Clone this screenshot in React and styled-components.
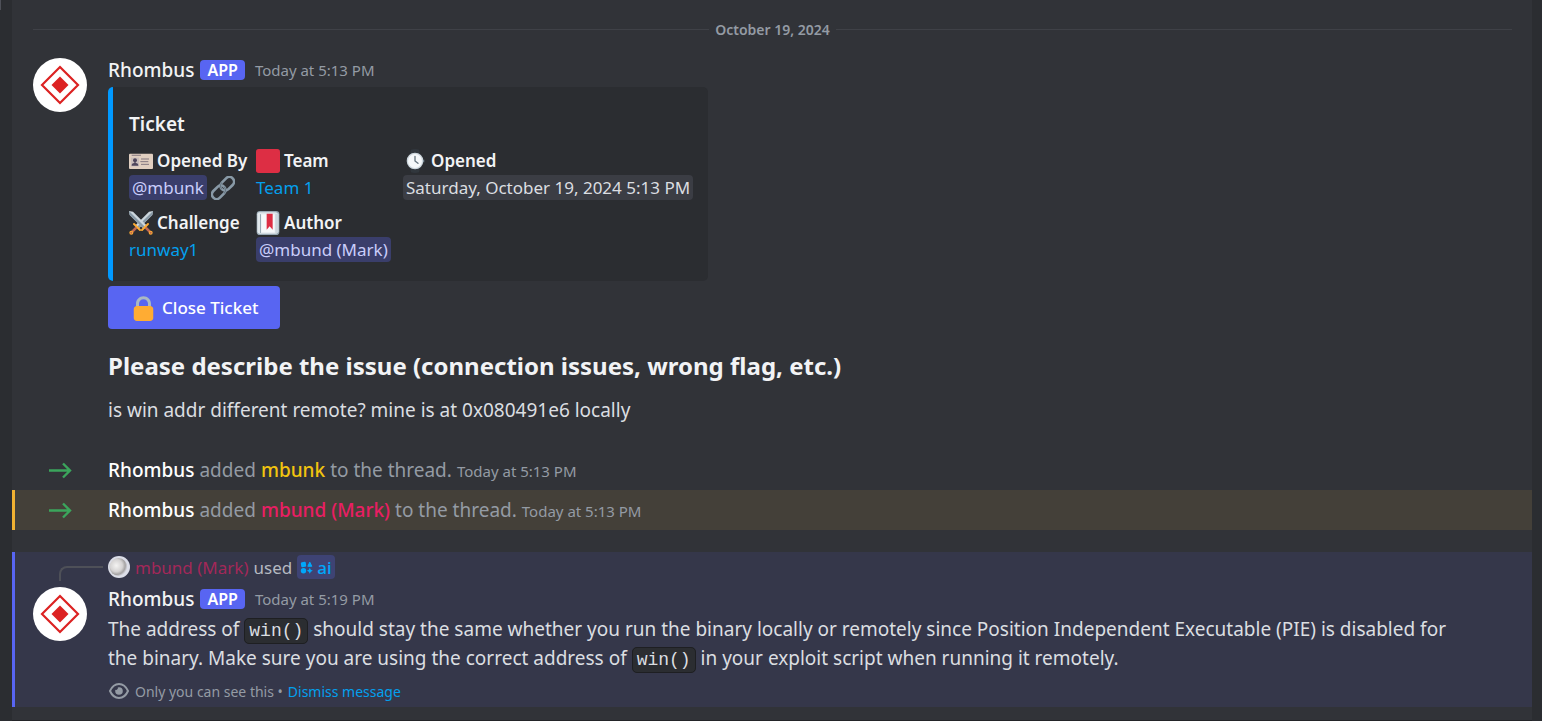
import React from 'react';
import styled, { createGlobalStyle } from 'styled-components';

const GlobalStyle = createGlobalStyle`
  * { box-sizing: border-box; }
  body {
    margin: 0;
    background: #2b2d31;
    font-family: "Noto Sans", "Open Sans", sans-serif;
    font-size: 19px;
    color: #dbdee1;
  }
  button { font: inherit; border: 0; cursor: pointer; }
  h1, h2, h3, p, ul, ol, dl, dd, dt { margin: 0; padding: 0; }
`;

const Page = styled.div`
  min-height: 100vh;
  padding: 0 10px 0 12px;
  background: linear-gradient(#4e5058, #4e5058) 0 0 / 1px 10px no-repeat;
`;

const Chat = styled.main`
  min-height: 100vh;
  padding-bottom: 12px;
  background: #313338;
  border-bottom: 1px solid #232428;
`;

const Divider = styled.div`
  display: flex;
  align-items: center;
  gap: 6px;
  padding: 19px 20px 0 21px;
  font-size: 14px;
  font-weight: 600;
  line-height: 21px;
  color: #949ba4;
  &::before, &::after {
    content: "";
    flex: 1;
    height: 1px;
    background: #3f4147;
  }
`;

const Message = styled.article`
  display: grid;
  grid-template-columns: 75px minmax(0, 1fr);
  row-gap: 6px;
  margin-top: ${p => (p.$ephemeral ? '22px' : '0')};
  padding: ${p => (p.$ephemeral ? '1px 64px 4px 18px' : '18px 64px 0 21px')};
  border-left: ${p => (p.$ephemeral ? '3px solid #5865f2' : '0')};
  background: ${p => (p.$ephemeral ? '#35374a' : 'transparent')};
`;

const AvatarSvg = styled.svg`
  display: block;
  width: 54px;
  height: 54px;
`;

const Header = styled.header`
  display: flex;
  align-items: center;
  height: 24px;
  margin-bottom: 4px;
`;

const Name = styled.span`
  font-weight: ${p => p.$weight || 500};
  color: ${p => p.$color || '#f2f3f5'};
`;

const AppTag = styled.span`
  height: 20px;
  margin: 0 10px 0 6px;
  padding: 0 7px;
  border-radius: 4px;
  background: #5865f2;
  color: #fff;
  font-size: 16px;
  font-weight: 600;
  line-height: 20px;
`;

const Time = styled.time`
  font-size: 15px;
  color: #949ba4;
`;

const Embed = styled.section`
  width: 600px;
  max-width: 100%;
  margin-top: 5px;
  padding: 24px 16px 18px;
  border-left: 5px solid #0099ff;
  border-radius: 5px;
  background: #2b2d31;
`;

const EmbedTitle = styled.h3`
  font-size: 19px;
  font-weight: 600;
  line-height: 26px;
  color: #f2f3f5;
`;

const Fields = styled.dl`
  display: grid;
  grid-template-columns: 116px 136px max-content;
  gap: 8px 11px;
  margin-top: 10px;
  font-size: 17px;
  line-height: 27px;
  white-space: nowrap;
`;

const FieldName = styled.dt`
  display: flex;
  align-items: center;
  gap: 4px;
  height: 27px;
  font-weight: 600;
  color: #f2f3f5;
`;

const FieldValue = styled.dd`
  display: flex;
  align-items: center;
  gap: 4px;
  height: 27px;
`;

const Emoji = styled.svg`
  flex: none;
  width: ${p => p.$size || 24}px;
  height: ${p => p.$size || 24}px;
`;

const Mention = styled.span`
  padding: 0 3px;
  border-radius: 4px;
  background: #3a3e6b;
  color: #c9cdfb;
  line-height: 25px;
`;

const Timestamp = styled.time`
  padding: 0 3px;
  border-radius: 4px;
  background: #3b3d44;
  line-height: 25px;
`;

const Link = styled.a`
  color: #03a0ee;
  text-decoration: none;
`;

const CloseButton = styled.button`
  display: flex;
  align-items: center;
  gap: 5px;
  height: 43px;
  margin-top: 5px;
  padding: 0 22px;
  border-radius: 4px;
  background: #5865f2;
  color: #fff;
  font-size: 17px;
  font-weight: 500;
`;

const Question = styled.h1`
  margin-top: 19px;
  font-size: 24px;
  font-weight: 700;
  line-height: 36px;
  color: #f2f3f5;
`;

const Answer = styled.p`
  margin-top: 11px;
  line-height: 30px;
`;

const SystemList = styled.section`
  margin-top: 25px;
`;

const SystemRow = styled.div`
  display: grid;
  grid-template-columns: 96px minmax(0, 1fr);
  align-items: center;
  height: 40px;
  background: ${p => (p.$mentioned ? '#444039' : 'transparent')};
  box-shadow: ${p => (p.$mentioned ? 'inset 3px 0 #f0b132' : 'none')};
  color: #949ba4;
`;

const Arrow = styled.svg`
  justify-self: center;
  width: 24px;
  height: 24px;
`;

const SystemText = styled.p`
  display: flex;
  align-items: baseline;
  gap: 5px;
  white-space: nowrap;
`;

const ReplySpine = styled.span`
  justify-self: end;
  align-self: end;
  width: 44px;
  height: 15px;
  margin-right: 5px;
  border-left: 2px solid #4e5058;
  border-top: 2px solid #4e5058;
  border-top-left-radius: 8px;
`;

const ReplyLine = styled.div`
  display: flex;
  align-items: center;
  gap: 5px;
  height: 28px;
  font-size: 17px;
  color: #b5bac1;
`;

const Command = styled.button`
  display: flex;
  align-items: center;
  gap: 4px;
  height: 24px;
  padding: 0 3px;
  border-radius: 4px;
  background: #3e4374;
  color: #00a8fc;
  font-weight: 500;
`;

const Body = styled.p`
  line-height: 29px;
`;

const Code = styled.code`
  padding: 2px 4px;
  border: 1px solid #1e1f22;
  border-radius: 5px;
  background: #2b2d31;
  font-family: "Liberation Mono", monospace;
  font-size: 18px;
  line-height: 18px;
`;

const Footer = styled.footer`
  display: flex;
  align-items: center;
  gap: 5px;
  height: 24px;
  margin-top: 6px;
  font-size: 14px;
  color: #949ba4;
`;

function Avatar() {
  return (
    <AvatarSvg viewBox="0 0 54 54" role="img" aria-label="Rhombus avatar">
      <circle cx="27" cy="27" r="27" fill="#fff" />
      <path d="M27 9 45 27 27 45 9 27Z" fill="none" stroke="#dc2222" strokeWidth="2.2" />
      <path d="M27 18.5 35.5 27 27 35.5 18.5 27Z" fill="#dc2222" />
    </AvatarSvg>
  );
}

function IdCard() {
  return (
    <Emoji viewBox="0 0 36 36" aria-hidden="true">
      <rect y="7" width="36" height="23" rx="1.5" fill="#e0cec0" />
      <path fill="#9b8c8e" d="M4 8.500h14v2H4z" />
      <path fill="#c9bdbb" d="M3 13h12v13H3z" />
      <circle cx="9" cy="17" r="3" fill="#50475d" />
      <path fill="#50475d" d="M8 19h2v2c3 0 4 1.500 4 4H4c0-2.500 1-4 4-4z" />
      <path stroke="#82767f" strokeWidth="1.500" d="M18 15h12M17 19h12M18 23h12" />
    </Emoji>
  );
}

function RedSquare() {
  return (
    <Emoji viewBox="0 0 36 36" aria-hidden="true">
      <rect width="36" height="36" rx="4" fill="#dd2e44" />
    </Emoji>
  );
}

function Watch() {
  return (
    <Emoji viewBox="0 0 36 36" aria-hidden="true">
      <path fill="#31373d" d="M12 1q6-2 12 0l2 10v14l-2 10q-6 2-12 0l-2-10V11z" />
      <path fill="#66757f" d="M29 16h3v4h-3z" />
      <circle cx="18" cy="18" r="12.500" fill="#ccd6dd" />
      <circle cx="18" cy="18" r="10.500" fill="#f5f8fa" />
      <path fill="none" stroke="#66757f" strokeWidth="2" strokeLinecap="round" strokeLinejoin="round" d="M18 11v7l4.500 3.500" />
    </Emoji>
  );
}

function Chain() {
  return (
    <Emoji viewBox="0 0 36 36" aria-hidden="true">
      <g fill="none" strokeWidth="4" transform="rotate(-45 18 18)">
        <rect x="-2.500" y="11" width="23" height="14" rx="7" stroke="#8899a6" />
        <rect x="15.500" y="11" width="23" height="14" rx="7" stroke="#8899a6" />
        <path d="M20.500 18a7 7 0 0 1-7 7" stroke="#667682" strokeWidth="1.500" />
        <path d="M15.500 18a7 7 0 0 1 7-7" stroke="#667682" strokeWidth="1.500" />
      </g>
    </Emoji>
  );
}

function Swords() {
  const sword = (
    <>
      <path fill="#ccd6dd" d="M0 0 6 1 27 22 22 27 1 6Z" />
      <path fill="#8899a6" d="M0 0 24.500 24.500 22 27 1 6Z" />
      <path stroke="#ffac33" strokeWidth="3" strokeLinecap="round" d="M28.500 19.500 19.500 28.500" />
      <path stroke="#bf6952" strokeWidth="4" d="M25 25 31 31" />
      <circle cx="32.500" cy="32.500" r="3" fill="#ffac33" />
      <circle cx="32.500" cy="32.500" r="1.500" fill="#bf6952" />
    </>
  );
  return (
    <Emoji viewBox="0 0 36 36" aria-hidden="true">
      <g transform="translate(36 0) scale(-1 1)">{sword}</g>
      {sword}
    </Emoji>
  );
}

function Bookmark() {
  return (
    <Emoji viewBox="0 0 36 36" aria-hidden="true">
      <rect x="1" width="34" height="36" rx="5" fill="#99aab5" />
      <path fill="#e1e8ed" d="M5 2h24a4 4 0 0 1 4 4v24a4 4 0 0 1-4 4H5a4 4 0 0 1-3-3V5a3 3 0 0 1 3-3z" />
      <path fill="#ccd6dd" d="M29 4h5v27l-5 4z" />
      <path fill="#99aab5" d="M6 5h1.500v28H6z" />
      <path fill="#f5f8fa" d="M8 5h20v27H8z" />
      <path fill="#dd2e44" d="M16 4h9v24l-4.500-5-4.500 5z" />
    </Emoji>
  );
}

function Lock() {
  return (
    <Emoji $size={27} viewBox="0 0 36 36" aria-hidden="true">
      <path fill="#aab8c2" d="M18 3C12.477 3 8 7.477 8 13v10h4V13c0-3.313 2.686-6 6-6s6 2.687 6 6v10h4V13c0-5.523-4.477-10-10-10z" />
      <path fill="#ffac33" d="M31 32c0 2.209-1.791 4-4 4H9c-2.209 0-4-1.791-4-4V20c0-2.209 1.791-4 4-4h18c2.209 0 4 1.791 4 4z" />
    </Emoji>
  );
}

function JoinArrow() {
  return (
    <Arrow viewBox="0 0 24 24" fill="none" stroke="#3ba55c" strokeWidth="2.400" aria-hidden="true">
      <path d="M1 12.500h21M15 5.500 22 12.500l-7 7" />
    </Arrow>
  );
}

function Orb() {
  return (
    <Emoji $size={22} viewBox="0 0 22 22" role="img" aria-label="mbund avatar">
      <defs>
        <radialGradient id="orb" cx="38%" cy="42%" r="62%">
          <stop offset="0" stopColor="#f4f3f2" />
          <stop offset="0.550" stopColor="#d5d3d3" />
          <stop offset="0.800" stopColor="#a5a3a3" />
          <stop offset="1" stopColor="#dcdde6" />
        </radialGradient>
      </defs>
      <circle cx="11" cy="11" r="11" fill="#dcdee8" />
      <circle cx="10.500" cy="11" r="9" fill="url(#orb)" />
    </Emoji>
  );
}

function AppGlyph() {
  return (
    <Emoji $size={13} viewBox="0 0 13 13" fill="#00a8fc" aria-hidden="true">
      <rect x="1" y="1" width="5" height="5" rx="1.200" transform="rotate(-8 3.500 3.500)" />
      <path d="M9.800 1.200 11.800 5.300h-4z" stroke="#00a8fc" strokeLinejoin="round" />
      <circle cx="3.500" cy="9.800" r="2.700" />
      <path d="M9.800 6.800 10.800 8.800 12.800 9.800 10.800 10.800 9.800 12.800 8.800 10.800 6.800 9.800 8.800 8.800z" />
    </Emoji>
  );
}

function Eye() {
  return (
    <Emoji $size={22} viewBox="0 0 22 22" fill="none" stroke="#949ba4" strokeWidth="2" aria-hidden="true">
      <path d="M2 11c2-4.500 5-7 9-7s7 2.500 9 7c-2 4.500-5 7-9 7s-7-2.500-9-7z" />
      <path fill="#949ba4" stroke="none" d="M11 7.200a3.800 3.800 0 1 1-3.800 3.800q0-.600.200-1.200a1.900 1.900 0 0 0 2.400-2.400q.600-.200 1.200-.200z" />
    </Emoji>
  );
}

function SystemMessage({ user, color, mentioned }) {
  return (
    <SystemRow $mentioned={mentioned}>
      <JoinArrow />
      <SystemText>
        <Name $color="#fff">Rhombus</Name>
        <span>added</span>
        <Name $color={color}>{user}</Name>
        <span>to the thread.</span>
        <Time>Today at 5:13 PM</Time>
      </SystemText>
    </SystemRow>
  );
}

function MessageHeader({ time }) {
  return (
    <Header>
      <Name>Rhombus</Name>
      <AppTag>APP</AppTag>
      <Time>Today at {time}</Time>
    </Header>
  );
}

export default function App() {
  return (
    <Page>
      <GlobalStyle />
      <Chat>
        <Divider>October 19, 2024</Divider>
        <Message>
          <Avatar />
          <div>
            <MessageHeader time="5:13 PM" />
            <Embed>
              <EmbedTitle>Ticket</EmbedTitle>
              <Fields>
                <div>
                  <FieldName><IdCard />Opened By</FieldName>
                  <FieldValue><Mention>@mbunk</Mention><Chain /></FieldValue>
                </div>
                <div>
                  <FieldName><RedSquare />Team</FieldName>
                  <FieldValue><Link href="#team">Team 1</Link></FieldValue>
                </div>
                <div>
                  <FieldName><Watch />Opened</FieldName>
                  <FieldValue><Timestamp>Saturday, October 19, 2024 5:13 PM</Timestamp></FieldValue>
                </div>
                <div>
                  <FieldName><Swords />Challenge</FieldName>
                  <FieldValue><Link href="#runway1">runway1</Link></FieldValue>
                </div>
                <div>
                  <FieldName><Bookmark />Author</FieldName>
                  <FieldValue><Mention>@mbund (Mark)</Mention></FieldValue>
                </div>
              </Fields>
            </Embed>
            <CloseButton type="button"><Lock />Close Ticket</CloseButton>
            <Question>Please describe the issue (connection issues, wrong flag, etc.)</Question>
            <Answer>is win addr different remote? mine is at 0x080491e6 locally</Answer>
          </div>
        </Message>
        <SystemList>
          <SystemMessage user="mbunk" color="#f1c40f" />
          <SystemMessage user="mbund (Mark)" color="#e91e63" mentioned />
        </SystemList>
        <Message $ephemeral>
          <ReplySpine />
          <ReplyLine>
            <Orb />
            <Name $color="#a32859" $weight={400}>mbund (Mark)</Name>
            <span>used</span>
            <Command type="button"><AppGlyph />ai</Command>
          </ReplyLine>
          <Avatar />
          <div>
            <MessageHeader time="5:19 PM" />
            <Body>
              The address of <Code>win()</Code> should stay the same whether you run the binary locally or
              remotely since Position Independent Executable (PIE) is disabled for the binary. Make sure you
              are using the correct address of <Code>win()</Code> in your exploit script when running it
              remotely.
            </Body>
            <Footer>
              <Eye />
              <span>Only you can see this •</span>
              <Link href="#dismiss">Dismiss message</Link>
            </Footer>
          </div>
        </Message>
      </Chat>
    </Page>
  );
}
